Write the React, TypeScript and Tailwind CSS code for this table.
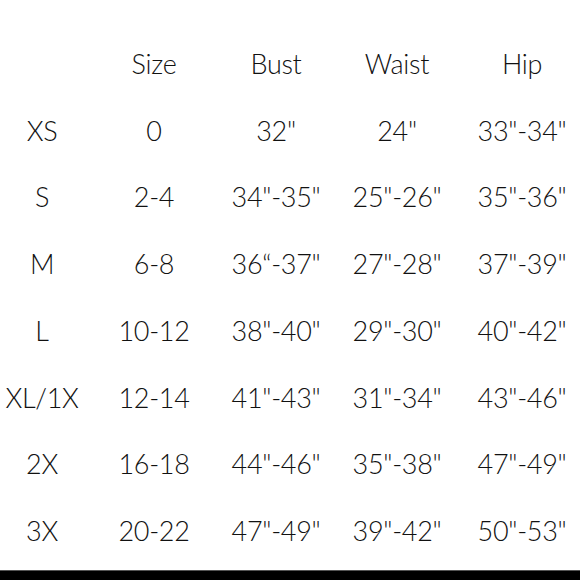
import React from "react";

const rows: string[][] = [
  ["", "Size", "Bust", "Waist", "Hip"],
  ["XS", "0", "32\"", "24\"", "33\"-34\""],
  ["S", "2-4", "34\"-35\"", "25\"-26\"", "35\"-36\""],
  ["M", "6-8", "36\u201c-37\"", "27\"-28\"", "37\"-39\""],
  ["L", "10-12", "38\"-40\"", "29\"-30\"", "40\"-42\""],
  ["XL/1X", "12-14", "41\"-43\"", "31\"-34\"", "43\"-46\""],
  ["2X", "16-18", "44\"-46\"", "35\"-38\"", "47\"-49\""],
  ["3X", "20-22", "47\"-49\"", "39\"-42\"", "50\"-53\""],
];

export default function App() {
  return (
    <div
      className="w-[580px] h-[580px] bg-white flex flex-col text-[#111]"
      style={{ fontFamily: "Lato, 'Open Sans', sans-serif" }}
    >
      <div className="pt-[31px] grid grid-cols-[84px_140px_104px_138px_112px]">
        {rows.map((r, i) =>
          r.map((c, j) => (
            <div
              key={`${i}-${j}`}
              className="h-[66.7px] flex items-center justify-center text-[27px] font-light whitespace-nowrap tracking-[-0.3px]"
            >
              {c}
            </div>
          ))
        )}
      </div>
      <div className="flex-1" />
      <div className="h-[10px] bg-black border-t border-[#555]" />
    </div>
  );
}
